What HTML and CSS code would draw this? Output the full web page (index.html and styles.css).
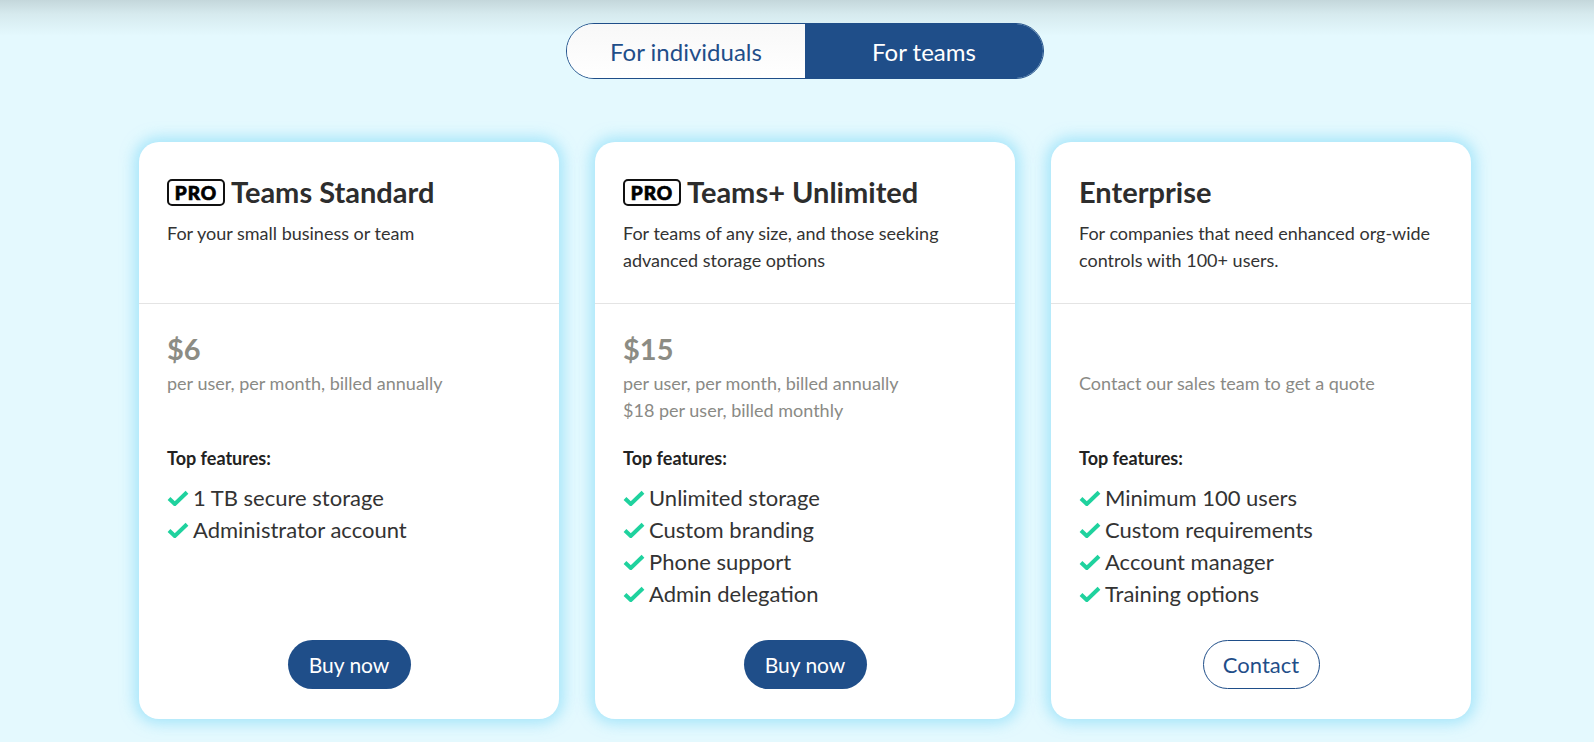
FILE: index.html
```html
<!DOCTYPE html>
<html lang="en">
<head>
<meta charset="utf-8">
<title>Pricing</title>
<link rel="stylesheet" href="styles.css">
</head>
<body>
<div class="page">
  <div class="toggle">
    <button class="toggle-btn">For individuals</button>
    <button class="toggle-btn active">For teams</button>
  </div>

  <div class="cards">
    <div class="card">
      <div class="card-head">
        <h2 class="title"><span class="pro">PRO</span>Teams Standard</h2>
        <p class="desc">For your small business or team</p>
      </div>
      <div class="card-price">
        <div class="price">$6</div>
        <p class="note">per user, per month, billed annually</p>
      </div>
      <div class="card-features">
        <h3 class="feat-title">Top features:</h3>
        <ul class="feat-list">
          <li><svg class="check" viewBox="0 0 22 16"><path d="M2 8.5 L7.8 14 L20 2.2"/></svg>1 TB secure storage</li>
          <li><svg class="check" viewBox="0 0 22 16"><path d="M2 8.5 L7.8 14 L20 2.2"/></svg>Administrator account</li>
        </ul>
      </div>
      <div class="card-action"><button class="btn btn-solid">Buy now</button></div>
    </div>

    <div class="card">
      <div class="card-head">
        <h2 class="title"><span class="pro">PRO</span>Teams+ Unlimited</h2>
        <p class="desc">For teams of any size, and those seeking advanced storage options</p>
      </div>
      <div class="card-price">
        <div class="price">$15</div>
        <p class="note">per user, per month, billed annually<br>$18 per user, billed monthly</p>
      </div>
      <div class="card-features">
        <h3 class="feat-title">Top features:</h3>
        <ul class="feat-list">
          <li><svg class="check" viewBox="0 0 22 16"><path d="M2 8.5 L7.8 14 L20 2.2"/></svg>Unlimited storage</li>
          <li><svg class="check" viewBox="0 0 22 16"><path d="M2 8.5 L7.8 14 L20 2.2"/></svg>Custom branding</li>
          <li><svg class="check" viewBox="0 0 22 16"><path d="M2 8.5 L7.8 14 L20 2.2"/></svg>Phone support</li>
          <li><svg class="check" viewBox="0 0 22 16"><path d="M2 8.5 L7.8 14 L20 2.2"/></svg>Admin delegation</li>
        </ul>
      </div>
      <div class="card-action"><button class="btn btn-solid">Buy now</button></div>
    </div>

    <div class="card">
      <div class="card-head">
        <h2 class="title">Enterprise</h2>
        <p class="desc">For companies that need enhanced org-wide controls with 100+ users.</p>
      </div>
      <div class="card-price">
        <div class="price"></div>
        <p class="note">Contact our sales team to get a quote</p>
      </div>
      <div class="card-features">
        <h3 class="feat-title">Top features:</h3>
        <ul class="feat-list">
          <li><svg class="check" viewBox="0 0 22 16"><path d="M2 8.5 L7.8 14 L20 2.2"/></svg>Minimum 100 users</li>
          <li><svg class="check" viewBox="0 0 22 16"><path d="M2 8.5 L7.8 14 L20 2.2"/></svg>Custom requirements</li>
          <li><svg class="check" viewBox="0 0 22 16"><path d="M2 8.5 L7.8 14 L20 2.2"/></svg>Account manager</li>
          <li><svg class="check" viewBox="0 0 22 16"><path d="M2 8.5 L7.8 14 L20 2.2"/></svg>Training options</li>
        </ul>
      </div>
      <div class="card-action"><button class="btn btn-outline">Contact</button></div>
    </div>
  </div>
</div>
</body>
</html>
```

FILE: styles.css
```css
* { box-sizing: border-box; }

html, body {
  margin: 0;
  padding: 0;
}

body {
  font-family: Lato, "Open Sans", "Liberation Sans", sans-serif;
  background: #e4f9fe;
  background-image: linear-gradient(to bottom, #c4d7db 0px, #d6eaee 14px, #e4f9fe 36px);
  background-repeat: no-repeat;
  color: #333;
  min-height: 742px;
}

.page {
  width: 1332px;
  margin-left: 139px;
  padding-top: 23px;
  display: flex;
  flex-direction: column;
  align-items: center;
}

.toggle {
  display: flex;
  width: 478px;
  height: 56px;
  border: 1px solid #1f4e89;
  border-radius: 28px;
  overflow: hidden;
}

.toggle-btn {
  flex: 1;
  border: 0;
  margin: 0;
  padding: 0;
  font-family: inherit;
  font-size: 24px;
  background: linear-gradient(to bottom, #f8f8f8, #ffffff);
  color: #1f4e89;
  cursor: pointer;
}

.toggle-btn.active {
  background: #1f4e89;
  color: #ffffff;
}

.cards {
  margin-top: 63px;
  display: flex;
  gap: 36px;
}

.card {
  width: 420px;
  height: 577px;
  background: #ffffff;
  border-radius: 20px;
  box-shadow: 0 0 14px 5px rgba(120, 215, 248, 0.55);
  display: flex;
  flex-direction: column;
}

.card-head {
  height: 162px;
  padding: 32px 28px 0;
  border-bottom: 1px solid #e4e4e4;
}

.title {
  margin: 0;
  display: flex;
  align-items: center;
  font-size: 29px;
  line-height: 36px;
  font-weight: 700;
  color: #2d2d2d;
}

.pro {
  display: inline-flex;
  align-items: center;
  justify-content: center;
  width: 58px;
  height: 27px;
  margin-right: 6px;
  border: 2px solid #111;
  border-radius: 5px;
  font-size: 19px;
  font-weight: 900;
  letter-spacing: 1px;
  color: #000;
  -webkit-text-stroke: 0.7px #000;
  line-height: 1;
}

.desc {
  margin: 10px 0 0;
  font-size: 18px;
  line-height: 27px;
  color: #333;
}

.card-price {
  height: 142px;
  padding: 27px 28px 0;
}

.price {
  height: 36px;
  font-size: 29px;
  line-height: 36px;
  font-weight: 700;
  color: #8c8c84;
}

.note {
  margin: 3px 0 0;
  font-size: 18px;
  line-height: 27px;
  color: #8a8a85;
}

.card-features {
  padding: 0 28px;
}

.feat-title {
  margin: 0;
  font-size: 18px;
  line-height: 24px;
  font-weight: 700;
  color: #222;
}

.feat-list {
  list-style: none;
  margin: 12px 0 0;
  padding: 0;
}

.feat-list li {
  display: flex;
  align-items: center;
  font-size: 22px;
  line-height: 32px;
  color: #333;
}

.check {
  width: 22px;
  height: 16px;
  margin-right: 4px;
  flex: none;
}

.check path {
  fill: none;
  stroke: #1fd29e;
  stroke-width: 4;
  stroke-linecap: butt;
  stroke-linejoin: miter;
}

.card-action {
  margin-top: auto;
  padding-bottom: 30px;
  display: flex;
  justify-content: center;
}

.btn {
  height: 49px;
  border-radius: 25px;
  font-family: inherit;
  cursor: pointer;
  padding: 0;
}

.btn-solid {
  width: 123px;
  font-size: 21px;
  background: #1f4e89;
  color: #fff;
  border: 0;
}

.btn-outline {
  width: 117px;
  font-size: 22px;
  background: #fff;
  color: #1f4e89;
  border: 1px solid #1f4e89;
}
```
